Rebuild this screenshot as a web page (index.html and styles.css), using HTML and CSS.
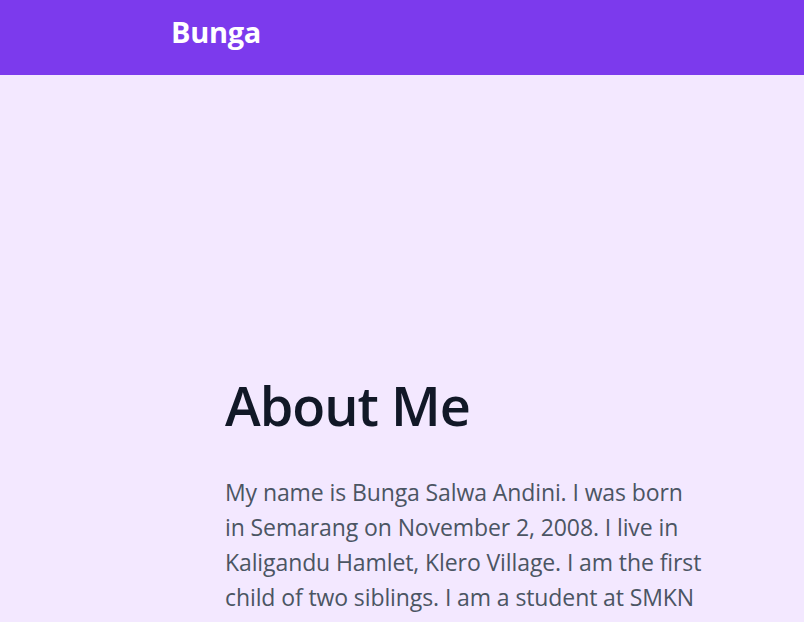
FILE: index.html
```html
<!DOCTYPE html>
<html lang="en">
<head>
<meta charset="utf-8">
<title>Bunga</title>
<link rel="stylesheet" href="styles.css">
</head>
<body>
<header class="topbar">
  <div class="brand">Bunga</div>
</header>
<main class="about">
  <h1 class="title">About Me</h1>
  <p class="bio">My name is Bunga Salwa Andini. I was born in Semarang on November 2, 2008. I live in Kaligandu Hamlet, Klero Village. I am the first child of two siblings. I am a student at SMKN 2 Salatiga majoring in Software Engineering.</p>
</main>
</body>
</html>
```
FILE: styles.css
```css
html, body {
  margin: 0;
  padding: 0;
}
body {
  background: #f3e8ff;
  font-family: "Open Sans", "Noto Sans", sans-serif;
  overflow: hidden;
}
.topbar {
  background: #7c3aed;
  height: 75px;
  box-sizing: border-box;
  display: flex;
  align-items: center;
  padding: 0 0 12px 171px;
}
.brand {
  color: #ffffff;
  font-weight: 700;
  font-size: 29px;
  letter-spacing: -0.3px;
}
.about {
  padding: 298px 0 0 225px;
}
.title {
  margin: 0;
  font-size: 54px;
  font-weight: 600;
  color: #111827;
  line-height: 1.2;
  letter-spacing: -1px;
}
.bio {
  margin: 37px 0 0;
  width: 482px;
  font-size: 23px;
  line-height: 35px;
  color: #4b5563;
  letter-spacing: -0.1px;
}
```
